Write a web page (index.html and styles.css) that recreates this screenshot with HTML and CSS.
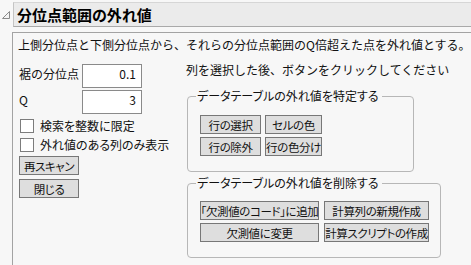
FILE: index.html
```html
<!DOCTYPE html>
<html lang="ja">
<head>
<meta charset="utf-8">
<link rel="stylesheet" href="styles.css">
</head>
<body>
<div class="report">
  <div class="hdr">
    <svg class="tri" width="10" height="10" viewBox="0 0 10 10"><polygon points="8.5,1.5 8.5,8.5 1.5,8.5" fill="#f4f4f4" stroke="#8a8a8a" stroke-width="1"/></svg>
    <div class="title-bar"><span class="title">分位点範囲の外れ値</span></div>
  </div>
  <div class="panel">
    <p class="intro">上側分位点と下側分位点から、それらの分位点範囲のQ倍超えた点を外れ値とする。</p>
    <div class="cols">
      <div class="left">
        <div class="field"><span class="lbl">裾の分位点</span><span class="num">0.1</span></div>
        <div class="field"><span class="lbl">Q</span><span class="num">3</span></div>
        <div class="checks">
          <label class="chk"><span class="box"></span><span class="chk-text">検索を整数に限定</span></label>
          <label class="chk"><span class="box"></span><span class="chk-text">外れ値のある列のみ表示</span></label>
        </div>
        <div class="actions">
          <button class="btn small">再スキャン</button>
          <button class="btn small">閉じる</button>
        </div>
      </div>
      <div class="right">
        <p class="hint">列を選択した後、ボタンをクリックしてください</p>
        <fieldset class="grp g1">
          <legend>データテーブルの外れ値を特定する</legend>
          <div class="grid grid1">
            <button class="btn">行の選択</button>
            <button class="btn">セルの色</button>
            <button class="btn">行の除外</button>
            <button class="btn">行の色分け</button>
          </div>
        </fieldset>
        <fieldset class="grp g2">
          <legend>データテーブルの外れ値を削除する</legend>
          <div class="grid grid2">
            <button class="btn">「欠測値のコード」に追加</button>
            <button class="btn">計算列の新規作成</button>
            <button class="btn">欠測値に変更</button>
            <button class="btn">計算スクリプトの作成</button>
          </div>
        </fieldset>
      </div>
    </div>
  </div>
</div>
</body>
</html>
```

FILE: styles.css
```css
html, body {
  margin: 0;
  padding: 0;
  background: #f7f7f7;
  overflow: hidden;
}
body {
  width: 471px;
  height: 265px;
  font-family: "Noto Sans CJK JP", "Noto Sans", sans-serif;
  font-size: 12px;
  color: #111;
}
.report {
  padding-top: 2px;
}
.hdr {
  display: flex;
  align-items: flex-start;
}
.tri {
  display: block;
  margin: 8px 2px 0 1px;
  flex: none;
}
.title-bar {
  flex: 1;
  height: 23px;
  background: #ebebeb;
  border-top: 1px solid #d6d6d6;
  border-left: 1px solid #c4c4c4;
  border-bottom: 1px solid #a9a9a9;
  padding-left: 3px;
  display: flex;
  align-items: center;
}
.title {
  font-size: 15px;
  font-weight: bold;
  font-feature-settings: "palt";
  color: #000;
  line-height: 20px;
}
.panel {
  margin: 5px 0 0 12px;
  border-top: 1px solid #a3a3a3;
  border-left: 1px solid #a3a3a3;
  height: 240px;
  padding: 4px 0 0 5px;
}
.intro, .hint {
  margin: 0;
  line-height: 16px;
  white-space: nowrap;
}
.cols {
  display: flex;
  margin-top: 9px;
}
.left {
  width: 167px;
  padding: 2px 0 0 1px;
  flex: none;
}
.field {
  display: flex;
  align-items: flex-start;
  height: 24px;
  margin-bottom: 2px;
}
.lbl {
  width: 63px;
  line-height: 18px;
  padding-top: 1px;
  white-space: nowrap;
}
.num {
  width: 53px;
  height: 22px;
  background: #fff;
  border: 1px solid #8a8a8a;
  text-align: right;
  padding-right: 5px;
  line-height: 18px;
  box-sizing: content-box;
}
.checks {
  margin-top: 1px;
}
.chk {
  display: flex;
  align-items: center;
  height: 19px;
  white-space: nowrap;
}
.box {
  width: 12px;
  height: 12px;
  background: #fff;
  border: 1px solid #7c7c7c;
  margin: 0 6px 0 1px;
  flex: none;
}
.chk-text {
  font-feature-settings: "palt";
  line-height: 16px;
}
.actions {
  display: flex;
  flex-direction: column;
  gap: 4px;
  margin-top: 2px;
}
.btn {
  font-family: inherit;
  font-size: 11.5px;
  letter-spacing: -0.4px;
  color: #111;
  background: #dedede;
  border: 1px solid #777;
  border-radius: 0;
  height: 19px;
  padding: 0;
  margin: 0;
  line-height: 16px;
  font-feature-settings: "palt";
  white-space: nowrap;
  display: flex;
  align-items: center;
  justify-content: center;
  overflow: visible;
}
.btn.small {
  width: 60px;
}
.right {
  flex: none;
}
.grp {
  margin: 10px 0 0 1px;
  padding: 11px 0 15px 12px;
  border: 1px solid #b7b7b7;
  border-radius: 4px;
}
.g1 {
  width: 213px;
}
.g2 {
  width: 240px;
  margin-top: 3px;
  padding-top: 10px;
  padding-bottom: 15px;
}
.grp legend {
  padding: 0 3px 0 1px;
  margin-left: -4px;
  line-height: 16px;
  font-feature-settings: "palt";
  white-space: nowrap;
}
.grid {
  display: grid;
  row-gap: 3px;
}
.grid1 {
  grid-template-columns: 61px 57px;
  column-gap: 4px;
}
.grid2 {
  grid-template-columns: 119px 105px;
  column-gap: 5px;
}
```
